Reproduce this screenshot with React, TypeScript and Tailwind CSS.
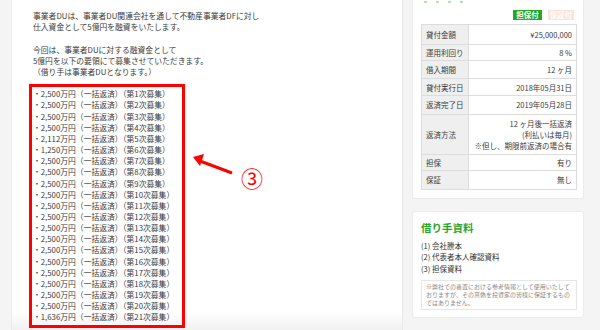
import React from "react";

const items: [string, number][] = [
  ["2,500", 1], ["2,500", 2], ["2,500", 3], ["2,500", 4], ["2,112", 5],
  ["1,250", 6], ["2,500", 7], ["2,500", 8], ["2,500", 9], ["2,500", 10],
  ["2,500", 11], ["2,500", 12], ["2,500", 13], ["2,500", 14], ["2,500", 15],
  ["2,500", 16], ["2,500", 17], ["2,500", 18], ["2,500", 19], ["2,500", 20],
  ["1,636", 21],
];

const rows: [string, React.ReactNode, string][] = [
  ["貸付金額", "¥25,000,000", "h-[18.7px]"],
  ["運用利回り", "8 %", "h-[16.6px]"],
  ["借入期間", "12 ヶ月", "h-[17.7px]"],
  ["貸付実行日", "2018年05月31日", "h-[17.3px]"],
  ["返済完了日", "2019年05月28日", "h-[18.4px]"],
  [
    "返済方法",
    <>
      <div>12 ヶ月後一括返済</div>
      <div>(利払いは毎月)</div>
      <div>※但し、期限前返済の場合有</div>
    </>,
    "h-[40px]",
  ],
  ["担保", "有り", "h-[16.6px]"],
  ["保証", "無し", "h-[18.4px]"],
];

export default function App() {
  return (
    <div
      className="relative flex w-[600px] h-[330px] overflow-hidden bg-[#f4f4f4] text-[#3a3a3a]"
      style={{ fontFamily: '"Noto Sans CJK JP", "Noto Sans", sans-serif' }}
    >
      {/* left strip */}
      <div className="w-[12px] shrink-0 bg-[#f4f4f4] border-r border-[#ebebeb]" />

      {/* main content */}
      <div className="relative w-[390px] shrink-0 bg-[linear-gradient(to_bottom,#ffffff_312px,#f1f1f1_330px)] pl-[21px] pt-[10px] text-[7.8px] leading-[11.3px]">
        <p>事業者DUは、事業者DU関連会社を通して不動産事業者DFに対し</p>
        <p>仕入資金として5億円を融資をいたします。</p>
        <p>&nbsp;</p>
        <p>今回は、事業者DUに対する融資金として</p>
        <p>5億円を以下の要領にて募集させていただきます。</p>
        <p>（借り手は事業者DUとなります。）</p>

        <div className="mt-[6px] ml-[-4px] w-[156px] border-[3px] border-[#ff0000] pl-[1px] pt-[1.5px] pb-[2px] leading-[11.15px]">
          {items.map(([amt, n]) => (
            <div key={n} className="whitespace-nowrap">
              ・{amt}万円（一括返済）（第{n}次募集）
            </div>
          ))}
        </div>

        {/* arrow annotation */}
        <svg
          className="absolute left-[176px] top-[150px]"
          width="50"
          height="30"
          viewBox="0 0 50 30"
        >
          <line x1="44" y1="23" x2="12" y2="11" stroke="#ff0000" strokeWidth="3" />
          <polygon points="5,7 16,4 12,16" fill="#ff0000" />
        </svg>
        <div className="absolute left-[229px] top-[164px] text-[22px] leading-[26px] text-[#ff0000]">
          ③
        </div>
      </div>

      {/* right column */}
      <div className="flex-1 border-l border-[#e9e9e9] bg-[#f4f4f4] pl-[9px] pr-[15px]">
        {/* card 1 */}
        <div className="mt-[-12px] w-[172px] rounded-[3px] bg-white border border-[#ececec] pl-[8px] pr-[6px] pb-[8px]">
          <div className="h-[14px] flex items-end gap-[9px] pl-[3px]">
            <span className="w-[3px] h-[2px] bg-[#b9e0b9]" />
            <span className="w-[3px] h-[2px] bg-[#b9e0b9]" />
            <span className="w-[3px] h-[2px] bg-[#b9e0b9]" />
            <span className="w-[3px] h-[2px] bg-[#b9e0b9]" />
          </div>
          <div className="mt-[7px] flex justify-end gap-[6px] pr-[3px] text-[7.5px] leading-[10px] font-bold text-white">
            <span className="w-[29px] bg-[#23a823] text-center">担保付</span>
            <span className="w-[26px] bg-[#fde2da] text-center">保証付</span>
          </div>
          <div className="mt-[4px] border border-[#dcdcdc] text-[7.5px] leading-[11px]">
            {rows.map(([k, v, h], i) => (
              <div
                key={k}
                className={`flex ${h} ${i > 0 ? "border-t border-[#dcdcdc]" : ""}`}
              >
                <div className="w-[47px] shrink-0 flex items-center bg-[#efefef] border-r border-[#dcdcdc] pl-[4px] whitespace-nowrap">
                  {k}
                </div>
                <div className="flex-1 flex flex-col justify-center items-end text-right pr-[4px] whitespace-nowrap">
                  {v}
                </div>
              </div>
            ))}
          </div>
        </div>

        {/* card 2 */}
        <div className="mt-[12px] w-[172px] h-[107px] rounded-[3px] bg-white border border-[#ececec] pl-[8px] pr-[6px] pt-[9px]">
          <div className="text-[10.5px] leading-[14px] font-bold text-[#2aa52a]">借り手資料</div>
          <div className="mt-[5px] text-[7.5px] leading-[11.5px] text-[#333]">
            <div>(1) 会社謄本</div>
            <div>(2) 代表者本人確認資料</div>
            <div>(3) 担保資料</div>
          </div>
          <div className="mt-[6px] border border-[#e6e6e6] px-[4px] py-[2px] text-[6px] leading-[7.8px] text-[#888]">
            ※弊社での審査における参考情報として使用いたしておりますが、その真偽を投資家の皆様に保証するものではありません。
          </div>
        </div>
      </div>
    </div>
  );
}
